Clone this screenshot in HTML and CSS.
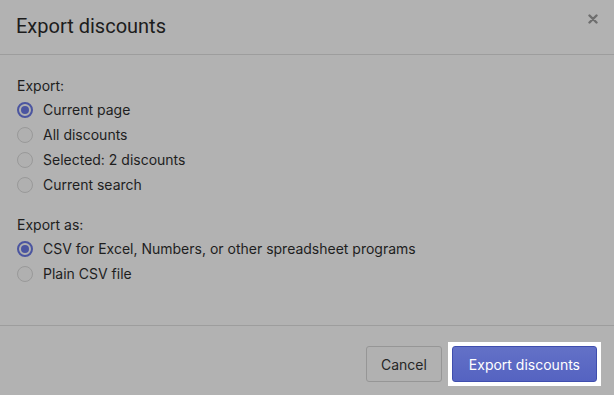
FILE: index.html
```html
<!DOCTYPE html>
<html>
<head>
  <meta charset="utf-8">
  <link rel="stylesheet" href="styles.css">
</head>
<body>
  <div class="modal">
    <div class="modal-header">
      <h2>Export discounts</h2>
      <svg class="close" width="10" height="10" viewBox="0 0 10 10">
        <path d="M1.5 1.5 L8.5 8.5 M8.5 1.5 L1.5 8.5" stroke="#6e6e6e" stroke-width="2.4" stroke-linecap="round"/>
      </svg>
    </div>

    <div class="modal-body">
      <div class="group">
        <div class="group-label">Export:</div>
        <label class="radio checked"><span class="dot"></span>Current page</label>
        <label class="radio"><span class="dot"></span>All discounts</label>
        <label class="radio"><span class="dot"></span>Selected: 2 discounts</label>
        <label class="radio"><span class="dot"></span>Current search</label>
      </div>

      <div class="group">
        <div class="group-label">Export as:</div>
        <label class="radio checked"><span class="dot"></span>CSV for Excel, Numbers, or other spreadsheet programs</label>
        <label class="radio"><span class="dot"></span>Plain CSV file</label>
      </div>
    </div>

    <div class="modal-footer">
      <button class="btn">Cancel</button>
      <span class="spotlight">
        <button class="btn btn-primary">Export discounts</button>
      </span>
    </div>
  </div>
</body>
</html>
```

FILE: styles.css
```css
* {
  margin: 0;
  padding: 0;
  box-sizing: border-box;
}

body {
  width: 614px;
  height: 395px;
  background: #b2b2b2;
  font-family: 'Inter', -apple-system, 'Segoe UI', Roboto, sans-serif;
  color: #1e1e1e;
  overflow: hidden;
}

.modal {
  display: flex;
  flex-direction: column;
  height: 395px;
}

.modal-header {
  height: 55px;
  display: flex;
  align-items: center;
  justify-content: space-between;
  padding: 0 16px 2px 16px;
  border-bottom: 1px solid #9d9d9d;
}

.modal-header h2 {
  font-family: Roboto, sans-serif;
  font-size: 20px;
  font-weight: 400;
  color: #1c1c1c;
}

.close {
  margin-top: -14px;
}

.modal-body {
  flex: 1;
  padding: 21px 17px 0;
  font-size: 14px;
}

.group {
  margin-bottom: 18px;
}

.group-label {
  height: 20px;
  line-height: 20px;
  margin-bottom: 1px;
}

.radio {
  display: flex;
  align-items: center;
  height: 25px;
  gap: 10px;
}

.dot {
  width: 16px;
  height: 16px;
  border-radius: 50%;
  border: 1px solid #999;
  background: #b0b0b0;
  position: relative;
}

.radio.checked .dot {
  border: 2px solid #4b55a0;
}

.radio.checked .dot::after {
  content: '';
  position: absolute;
  top: 2px;
  left: 2px;
  width: 8px;
  height: 8px;
  border-radius: 50%;
  background: #4b55a0;
}

.modal-footer {
  display: flex;
  justify-content: flex-end;
  align-items: flex-start;
  gap: 6px;
  padding: 16px 13px 9px;
  border-top: 1px solid #9d9d9d;
  height: 70px;
}

.btn {
  height: 36px;
  padding: 0 14px;
  border: 1px solid #969696;
  border-radius: 3px;
  background: #b1b1b1;
  color: #262626;
  font-family: inherit;
  font-size: 14px;
  margin-top: 4px;
}

.spotlight {
  background: #fff;
  padding: 4px;
}

.btn-primary {
  margin-top: 0;
  background: linear-gradient(#6371c7, #5563c1);
  border-color: #3f4eae;
  color: #fff;
  padding: 0 16px;
}
```
